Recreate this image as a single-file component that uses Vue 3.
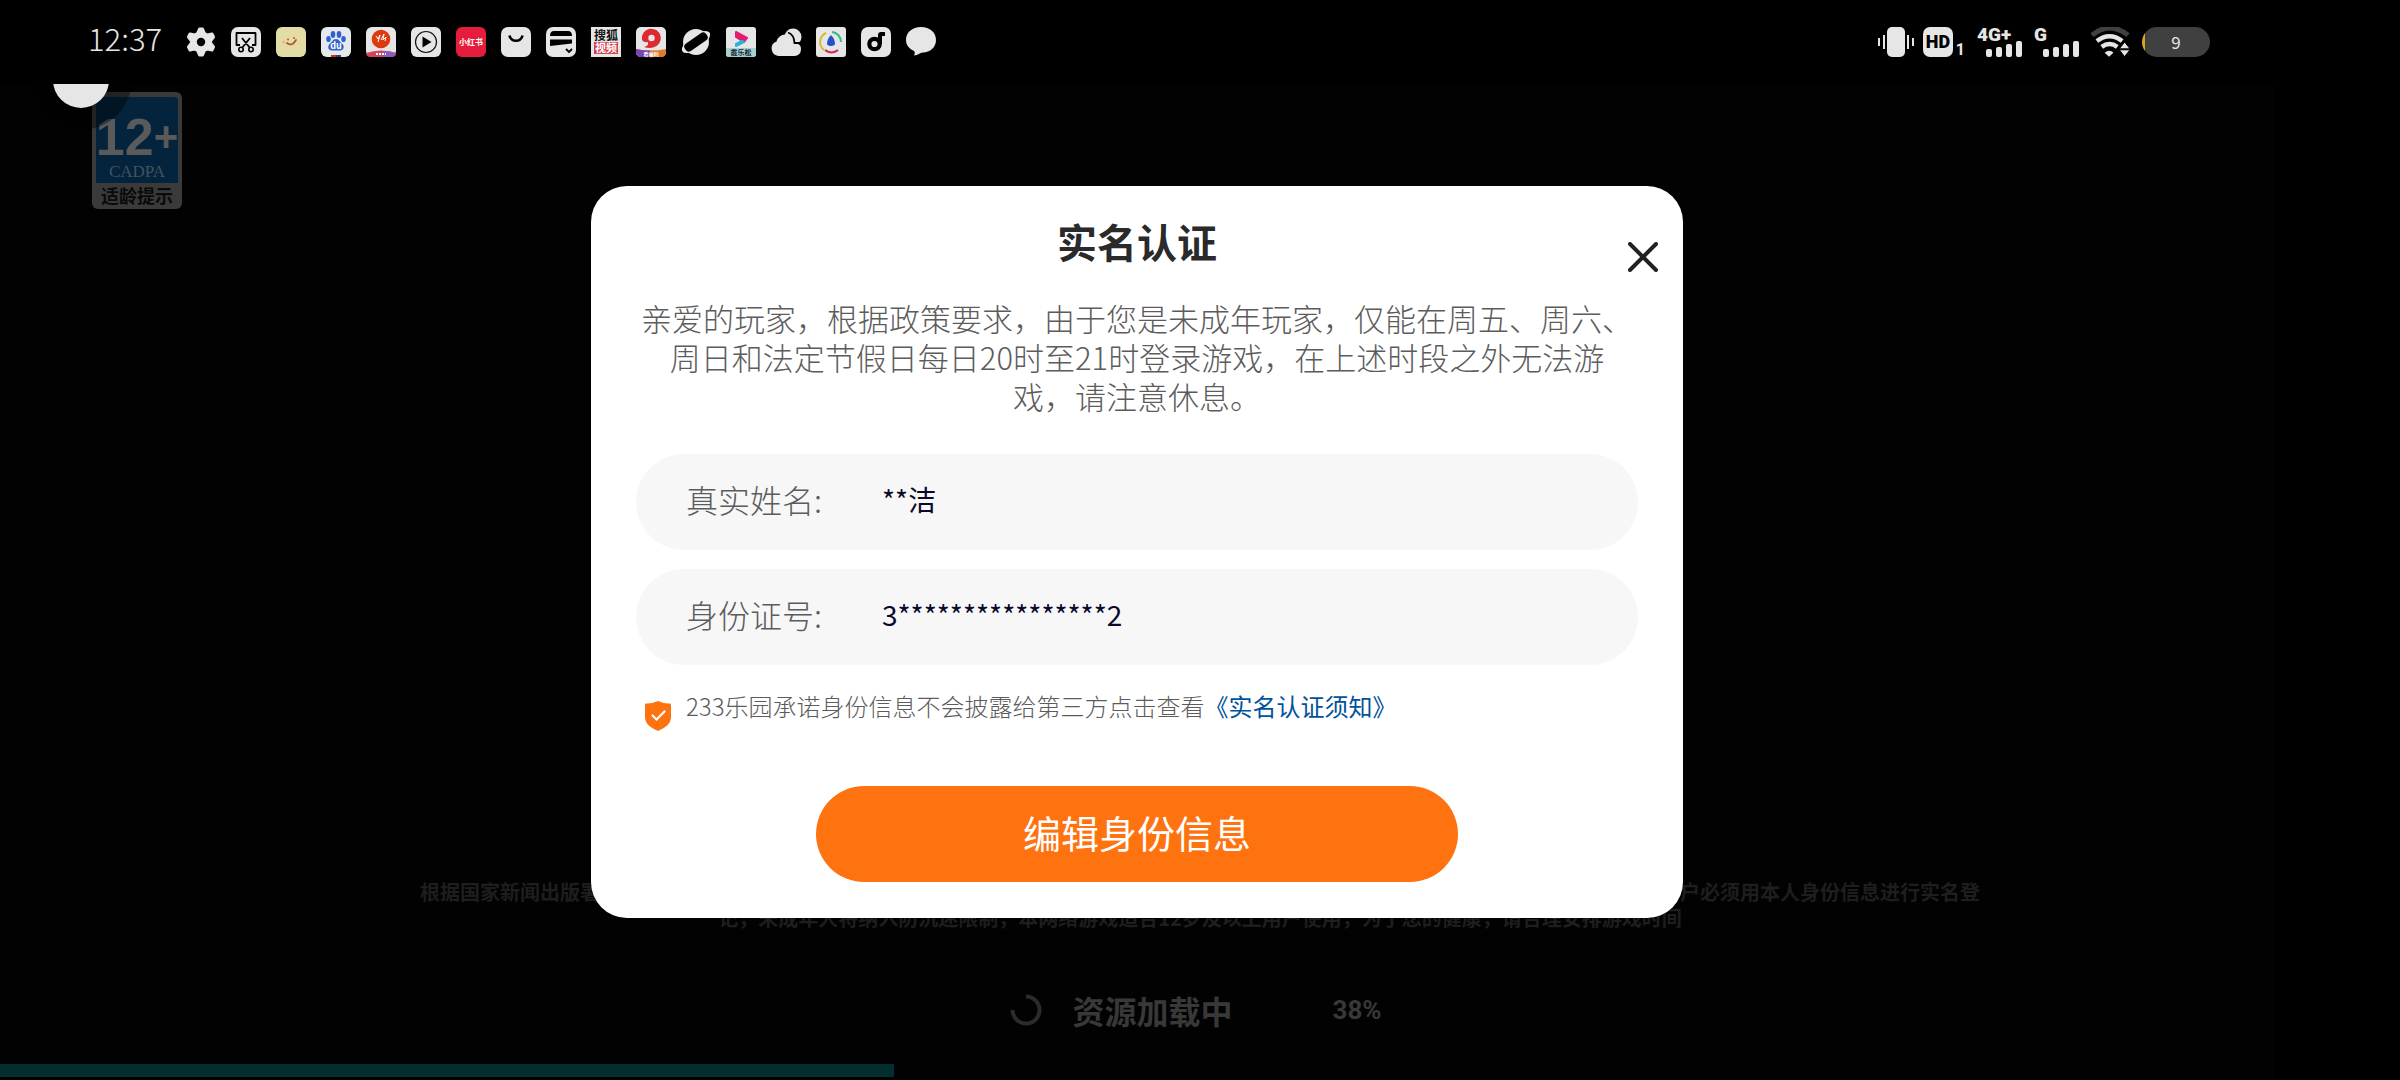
<script setup>
import { ref } from 'vue'

const progress = ref(38)
const notice = [
  '亲爱的玩家，根据政策要求，由于您是未成年玩家，仅能在周五、周六、',
  '周日和法定节假日每日20时至21时登录游戏，在上述时段之外无法游',
  '戏，请注意休息。',
]
const fields = [
  { id: 'real-name', label: '真实姓名:', value: '**洁' },
  { id: 'id-number', label: '身份证号:', value: '3****************2' },
]
const bars = [8, 10, 13, 16]
</script>

<template>
  <div class="screen">
    <header class="status">
      <div class="status-left">
        <time class="clock">12:37</time>
        <!-- settings -->
        <svg class="icon" viewBox="0 0 30 30">
          <path fill="#e6e6e6" stroke="#e6e6e6" stroke-width="3" stroke-linejoin="round" d="M13.500 2h3l2 4.500 3 1.500 4.500-1 1.500 3-3 4v2l3 4-1.500 3-4.500-1-3 1.500-2 4.500h-3l-2-4.500-3-1.500L4 23l-1.500-3 3-4v-2l-3-4L4 7l4.500 1 3-1.500z" />
          <circle cx="15" cy="15" r="4.200" fill="#000" />
        </svg>
        <!-- screenshot -->
        <svg class="icon" viewBox="0 0 30 30">
          <rect width="30" height="30" rx="7" fill="#e6e6e6" />
          <path d="M9 18H5.500V6h19v12H21M11 11l8 10M19 11l-8 10" fill="none" stroke="#000" stroke-width="1.800" stroke-linejoin="round" />
          <circle cx="10" cy="22.500" r="2.200" fill="none" stroke="#000" stroke-width="1.600" />
          <circle cx="20" cy="22.500" r="2.200" fill="none" stroke="#000" stroke-width="1.600" />
        </svg>
        <!-- smile -->
        <svg class="icon" viewBox="0 0 30 30">
          <rect width="30" height="30" rx="6" fill="#e3dca4" />
          <path d="M11 16q5 4 9-3" fill="none" stroke="#b4572c" stroke-width="1.800" stroke-linecap="round" />
          <circle cx="12" cy="12.500" r="1" fill="#b4572c" /><circle cx="18" cy="11" r="1" fill="#b4572c" />
          <circle cx="7.500" cy="15" r="1.500" fill="#eab58c" />
        </svg>
        <!-- paw -->
        <svg class="icon" viewBox="0 0 30 30">
          <rect width="30" height="30" rx="6" fill="#e6e9ec" />
          <g fill="#2f62d0">
            <ellipse cx="7.500" cy="12" rx="2.300" ry="3.100" /><ellipse cx="12" cy="7.500" rx="2.300" ry="3.400" />
            <ellipse cx="18" cy="7.500" rx="2.300" ry="3.400" /><ellipse cx="22.500" cy="12" rx="2.300" ry="3.100" />
            <path d="M15 12c3 0 4 3 6 4.500 3 2.500 2 7-2 7h-8c-4 0-5-4.500-2-7C11 15 12 12 15 12z" />
          </g>
          <text x="15" y="22" class="tiny" font-size="9" fill="#fff">du</text>
          <path d="M10 28h5v2h-5z" fill="#c9302c" /><path d="M15 28h5v2h-5z" fill="#333a80" />
        </svg>
        <!-- red ball -->
        <svg class="icon" viewBox="0 0 30 30">
          <rect width="30" height="30" rx="6" fill="#e6e6e6" />
          <circle cx="15" cy="12" r="9.300" fill="#dc3a10" />
          <path d="M10 9l2 3 2-4-2 7M15 13l3-6-1 6 3-3-1 4" fill="none" stroke="#fff" stroke-width="1" />
          <path d="M0 26q15-5 30 0v1q0 3-5 3H5q-5 0-5-4z" fill="#d8435a" />
          <path d="M17 24q8 0 13 2-1 4-5 4h-9z" fill="#8f5bb8" />
          <path d="M10 27h10" stroke="#fff" stroke-width="2" stroke-dasharray="2 1" />
        </svg>
        <!-- player -->
        <svg class="icon" viewBox="0 0 30 30">
          <rect width="30" height="30" rx="6" fill="#e6e6e6" />
          <circle cx="15" cy="15" r="10.500" fill="none" stroke="#111" stroke-width="1.200" />
          <path d="M11.500 9.500l9 5.500-9 5.500z" fill="#000" />
        </svg>
        <!-- red note -->
        <svg class="icon" viewBox="0 0 30 30">
          <rect width="30" height="30" rx="6" fill="#e61c3c" />
          <text x="15" y="18" class="tiny" font-size="8" fill="#fff">小红书</text>
        </svg>
        <!-- bag -->
        <svg class="icon" viewBox="0 0 30 30">
          <rect width="30" height="30" rx="7" fill="#e6e6e6" />
          <path d="M8.500 8.500c1 7 12 7 13 0" fill="none" stroke="#000" stroke-width="2.600" />
        </svg>
        <!-- card wallet -->
        <svg class="icon" viewBox="0 0 30 30">
          <rect width="30" height="30" rx="7" fill="#e6e6e6" />
          <path d="M4 9q0-5 4-5h14q4 0 4 5zM4 12.500h22v4L4 19z" fill="#000" />
          <path d="M20 22l3 3 3-3" fill="none" stroke="#000" stroke-width="1.800" />
        </svg>
        <!-- video portal -->
        <svg class="icon" viewBox="0 0 30 30">
          <rect width="30" height="30" fill="#e6e6e6" />
          <rect x="3" y="15" width="24" height="12" fill="#d2404e" />
          <text x="15" y="13" class="tiny" font-size="12" fill="#111">搜狐</text>
          <text x="15" y="25" class="tiny" font-size="11" fill="#fff">视频</text>
        </svg>
        <!-- ring player -->
        <svg class="icon" viewBox="0 0 30 30">
          <rect width="30" height="30" rx="5" fill="#e6e6e6" />
          <path d="M8 20q5-1 4-5-4 1-6-2A9.500 9.500 0 1 1 17 20.500q-4 1-9-.5z" fill="#dd2a31" />
          <circle cx="15.500" cy="11" r="3.200" fill="#e6e6e6" />
          <path d="M0 22q15 3 30 0v3q0 5-5 5H5q-5 0-5-5z" fill="#e07a2c" />
          <path d="M0 22q8 1.500 14 1.500V30H5q-5 0-5-5z" fill="#7a44b4" />
          <text x="15" y="29" class="tiny" font-size="5" fill="#fff">看福利</text>
        </svg>
        <!-- planet -->
        <svg class="icon" viewBox="0 0 30 30">
          <circle cx="15" cy="15" r="13" fill="#e6e6e6" />
          <g transform="rotate(-35 15 15)">
            <ellipse cx="15" cy="15" rx="16.500" ry="7" fill="#e6e6e6" />
            <rect x="2" y="10.500" width="26" height="9" rx="4" fill="#000" />
          </g>
        </svg>
        <!-- arrow app -->
        <svg class="icon" viewBox="0 0 30 30">
          <rect width="30" height="30" rx="3" fill="#e6e6e6" />
          <path d="M10 5l11 6-3 4-8-5z" fill="#e01f6c" stroke="#e01f6c" stroke-width="2" stroke-linejoin="round" />
          <path d="M16 14l2 1-8 4v-2z" fill="#24b6dc" stroke="#24b6dc" stroke-width="2" stroke-linejoin="round" />
          <path d="M0 21h30v6q0 3-3 3H3q-3 0-3-3z" fill="#a6d3d0" />
          <text x="15" y="28" class="tiny" font-size="7" fill="#123">霰乐松</text>
        </svg>
        <!-- weather -->
        <svg class="icon" viewBox="0 0 30 30">
          <circle cx="22" cy="10" r="8.500" fill="#e6e6e6" />
          <path d="M7.500 29a7.500 7.500 0 0 1-2-14.500 9 9 0 0 1 17.500 0V17h4q3 1 3 5 0 6-6 7z" fill="#e6e6e6" />
          <path d="M17 5.500q6 2 6.500 10.500H30" fill="none" stroke="#000" stroke-width="1.800" />
        </svg>
        <!-- colour ring -->
        <svg class="icon" viewBox="0 0 30 30">
          <rect width="30" height="30" rx="3" fill="#e6e6e6" />
          <g fill="none" stroke-width="2">
            <path d="M10 6a10 10 0 0 0-2 17" stroke="#d6bd2c" /><path d="M16 5a10 10 0 0 1 9 10" stroke="#37b887" />
            <path d="M9 23a10 10 0 0 0 13 0" stroke="#d0284c" />
          </g>
          <path d="M15 8c3 3 4 6 4 9.500q-4 3-8 0C11 14 12 11 15 8z" fill="#2450c8" />
        </svg>
        <!-- note player -->
        <svg class="icon" viewBox="0 0 30 30">
          <rect width="30" height="30" rx="7" fill="#e6e6e6" />
          <circle cx="13.500" cy="17" r="5.200" fill="none" stroke="#000" stroke-width="4.200" />
          <path d="M17 17V8q0-3 3-3h4v4h-3v8z" fill="#000" />
        </svg>
        <!-- message -->
        <svg class="icon" viewBox="0 0 30 30">
          <path d="M15 0c9 0 15 5.500 15 13s-6 12.500-13 12.500c-3 0-5 3-9 3 1-2 1-3.500 0-4.500C3 21.500 0 18 0 13 0 5.500 6 0 15 0z" fill="#e6e6e6" />
        </svg>
      </div>

      <div class="status-right">
        <svg class="vibrate" viewBox="0 0 36 30">
          <rect x="9" y="0" width="18" height="30" rx="5" fill="#e6e6e6" />
          <path d="M6 8v14M1 11v8M30 8v14M35 11v8" stroke="#e6e6e6" stroke-width="2" />
        </svg>
        <span class="hd"><b>HD</b><small>1</small></span>
        <span class="signal">
          <b>4G+</b>
          <i v-for="h in bars" :key="h" :style="{ height: h + 'px' }"></i>
        </span>
        <span class="signal">
          <b>G</b>
          <i v-for="h in bars" :key="h" :style="{ height: h + 'px' }"></i>
        </span>
        <svg class="wifi" viewBox="0 0 40 30">
          <path d="M1 8q18-15 37 0" fill="none" stroke="#404040" stroke-width="5" />
          <g fill="none" stroke="#e6e6e6" stroke-width="4.500">
            <path d="M6 14q13-10 26 0" /><path d="M11 20q8-6 16 0" />
          </g>
          <path d="M14 26q5-4 9 0l-4.500 4z" fill="#e6e6e6" />
          <path d="M29 22l5.500-7 5.500 7zM29 23h11l-5.500 7z" fill="#e6e6e6" stroke="#000" stroke-width="1" />
        </svg>
        <span class="battery">9</span>
      </div>
    </header>

    <main class="game">
      <div class="age-badge">
        <div class="age-top">
          <p class="age"><span>12</span><span class="plus">+</span></p>
          <p class="org">CADPA</p>
        </div>
        <p class="tip">适龄提示</p>
      </div>
      <div class="bubble-clip"><span class="halo"></span><span class="bubble"></span></div>

      <section class="loading">
        <div class="legal">
          <p class="legal-row"><span>根据国家新闻出版署</span><span>户必须用本人身份信息进行实名登</span></p>
          <p>记，未成年人将纳入防沉迷限制，本网络游戏适合12岁及以上用户使用，为了您的健康，请合理安排游戏时间</p>
        </div>
        <div class="load-row">
          <svg class="spinner" viewBox="0 0 32 32">
            <path d="M16 2.500A13.500 13.500 0 1 1 2.500 16" fill="none" stroke="#2b2b2b" stroke-width="4" />
          </svg>
          <span class="load-text">资源加载中</span>
          <span class="load-percent">{{ progress }}%</span>
        </div>
        <div class="track"><div class="fill" :style="{ width: progress + '%' }"></div></div>
      </section>

      <div class="overlay">
        <form class="dialog" role="dialog" aria-labelledby="dialog-title" @submit.prevent>
          <button class="close" type="button" aria-label="关闭">
            <svg viewBox="0 0 30 30"><path d="M2 2l26 26M28 2L2 28" stroke="#222" stroke-width="4" stroke-linecap="round" /></svg>
          </button>
          <h1 id="dialog-title">实名认证</h1>
          <p class="notice"><span v-for="line in notice" :key="line">{{ line }}</span></p>
          <div v-for="f in fields" :key="f.id" class="field">
            <label :for="f.id">{{ f.label }}</label>
            <input :id="f.id" type="text" :value="f.value" readonly />
          </div>
          <div class="promise">
            <svg class="shield" viewBox="0 0 26 30">
              <path d="M13 0q7 3 12 2.500 1 0 1 1V16c0 7-6 11-13 14C6 27 0 23 0 16V3.500q0-1 1-1Q6 3 13 0z" fill="#ff7210" />
              <path d="M7.500 14.500l4 4 8-8" fill="none" stroke="#fff" stroke-width="2.200" stroke-linecap="round" />
            </svg>
            <p>233乐园承诺身份信息不会披露给第三方点击查看<a href="#">《实名认证须知》</a></p>
          </div>
          <button class="submit" type="submit">编辑身份信息</button>
        </form>
      </div>
    </main>
  </div>
</template>

<style>
body {
  margin: 0;
  background: #000;
}
</style>

<style scoped>
.screen {
  display: flex;
  flex-direction: column;
  min-height: 100vh;
  background: #000;
  font-family: "Noto Sans CJK SC", sans-serif;
}
p,
h1 {
  margin: 0;
}
.status {
  display: flex;
  justify-content: space-between;
  align-items: center;
  box-sizing: border-box;
  height: 84px;
  padding: 0 190px 0 88px;
  color: #e6e6e6;
}
.status-left {
  display: flex;
  align-items: center;
  gap: 15px;
}
.clock {
  width: 83px;
  padding-bottom: 8px;
  font-size: 31px;
  font-weight: 300;
  line-height: 30px;
}
.icon {
  width: 30px;
  height: 30px;
  overflow: visible;
}
.tiny {
  font-family: "Noto Sans CJK SC", sans-serif;
  font-weight: 700;
  text-anchor: middle;
}
.status-right {
  display: flex;
  align-items: center;
  gap: 12px;
}
.vibrate {
  width: 36px;
  height: 30px;
}
.hd {
  display: flex;
  align-items: flex-end;
  gap: 3px;
  width: 42px;
  margin-left: -3px;
}
.hd b {
  width: 30px;
  border-radius: 7px;
  background: #e6e6e6;
  color: #000;
  font: 900 18px/30px Roboto, sans-serif;
  text-align: center;
}
.hd small {
  font: 700 16px/14px Roboto, sans-serif;
}
.signal {
  position: relative;
  display: flex;
  align-items: flex-end;
  justify-content: flex-end;
  gap: 4px;
  width: 45px;
  height: 30px;
}
.signal b {
  position: absolute;
  top: 0;
  left: 0;
  font: 900 19px/16px Roboto, sans-serif;
}
.signal i {
  width: 6px;
  border-radius: 2px;
  background: #e6e6e6;
}
.wifi {
  width: 39px;
  height: 30px;
}
.battery {
  width: 68px;
  border-radius: 15px;
  background: linear-gradient(to right, #d9a520 3px, #404040 3px);
  font-size: 17px;
  line-height: 30px;
  text-align: center;
}
.game {
  position: relative;
  display: flex;
  flex: 1;
  flex-direction: column;
  justify-content: space-between;
  background: linear-gradient(to left, #000 126px, #020202 126px);
}
.age-badge {
  box-sizing: border-box;
  width: 90px;
  margin: 8px 0 0 92px;
  padding: 5px 4px 2px;
  border-radius: 6px;
  background: #3a3a3a;
  text-align: center;
}
.age-top {
  height: 86px;
  border-radius: 4px 4px 0 0;
  background: #03243c;
  color: #5a5a5a;
}
.age {
  display: flex;
  align-items: center;
  justify-content: center;
  padding-top: 14px;
  font: 700 52px/52px "Liberation Sans", sans-serif;
}
.plus {
  font-size: 42px;
}
.org {
  color: #44525c;
  font: 17px/17px "Liberation Serif", serif;
}
.tip {
  color: #0a0a0a;
  font-size: 18px;
  font-weight: 700;
  line-height: 24px;
}
.bubble-clip {
  position: absolute;
  top: 0;
  left: 30px;
  width: 102px;
  height: 46px;
  overflow: hidden;
}
.halo,
.bubble {
  position: absolute;
  border-radius: 50%;
}
.halo {
  top: -56px;
  left: 0;
  width: 102px;
  height: 102px;
  background: rgba(0, 0, 0, 0.4);
}
.bubble {
  top: -32px;
  left: 23px;
  width: 56px;
  height: 56px;
  background: #e6e6e6;
}
.loading {
  padding-bottom: 3px;
}
.legal {
  color: #1e1e1e;
  font-size: 20px;
  font-weight: 700;
  line-height: 26px;
  text-align: center;
}
.legal-row {
  display: flex;
  justify-content: space-between;
  width: 65%;
  margin: 0 auto;
}
.load-row {
  display: flex;
  align-items: center;
  justify-content: center;
  margin: 55px 8px 30px 0;
  color: #383838;
  font-weight: 700;
  line-height: 48px;
}
.spinner {
  width: 32px;
  height: 32px;
}
.load-text {
  margin: 0 100px 0 30px;
  font-size: 32px;
}
.load-percent {
  font-family: Roboto, sans-serif;
  font-size: 26px;
}
.track {
  margin-right: 48px;
}
.fill {
  height: 13px;
  background: #042d30;
}
.overlay {
  position: absolute;
  inset: 0;
  display: flex;
  align-items: center;
  justify-content: center;
  padding: 0 126px 60px 0;
}
.dialog {
  position: relative;
  box-sizing: border-box;
  width: 100%;
  max-width: 1092px;
  padding: 25px 45px 36px;
  border-radius: 36px;
  background: #fff;
}
.close {
  position: absolute;
  top: 46px;
  right: 15px;
  width: 50px;
  height: 50px;
  padding: 10px;
  border: 0;
  background: none;
}
.close svg {
  display: block;
  width: 30px;
  height: 30px;
}
h1 {
  color: #2a2a2a;
  font-size: 40px;
  font-weight: 700;
  line-height: 60px;
  text-align: center;
}
.notice {
  margin: 27px 0 39px;
  color: #5c5c5c;
  font-size: 31px;
  font-weight: 300;
  line-height: 39px;
  text-align: center;
}
.notice span {
  display: block;
}
.field {
  display: flex;
  align-items: center;
  box-sizing: border-box;
  height: 96px;
  padding: 0 50px 6px;
  border-radius: 48px;
  background: #f7f7f7;
}
.field + .field {
  margin-top: 19px;
}
.field label {
  width: 196px;
  color: #5c5c5c;
  font-size: 32px;
  font-weight: 300;
}
.field input {
  flex: 1;
  min-width: 0;
  padding: 0;
  border: 0;
  outline: 0;
  background: none;
  color: #0a0a2a;
  font-family: inherit;
  font-size: 28px;
}
.promise {
  display: flex;
  align-items: flex-start;
  gap: 15px;
  margin: 26px 0 55px 9px;
  color: #5c5c5c;
  font-size: 24px;
  font-weight: 300;
  line-height: 30px;
}
.shield {
  width: 26px;
  height: 30px;
  padding-top: 10px;
}
.promise a {
  color: #00529b;
  font-weight: 400;
  text-decoration: none;
}
.submit {
  display: block;
  width: 642px;
  max-width: 100%;
  height: 96px;
  margin: 0 auto;
  padding: 0 0 6px;
  border: 0;
  border-radius: 48px;
  background: #ff7210;
  color: #fff;
  font-family: inherit;
  font-size: 38px;
  font-weight: 400;
}
</style>
